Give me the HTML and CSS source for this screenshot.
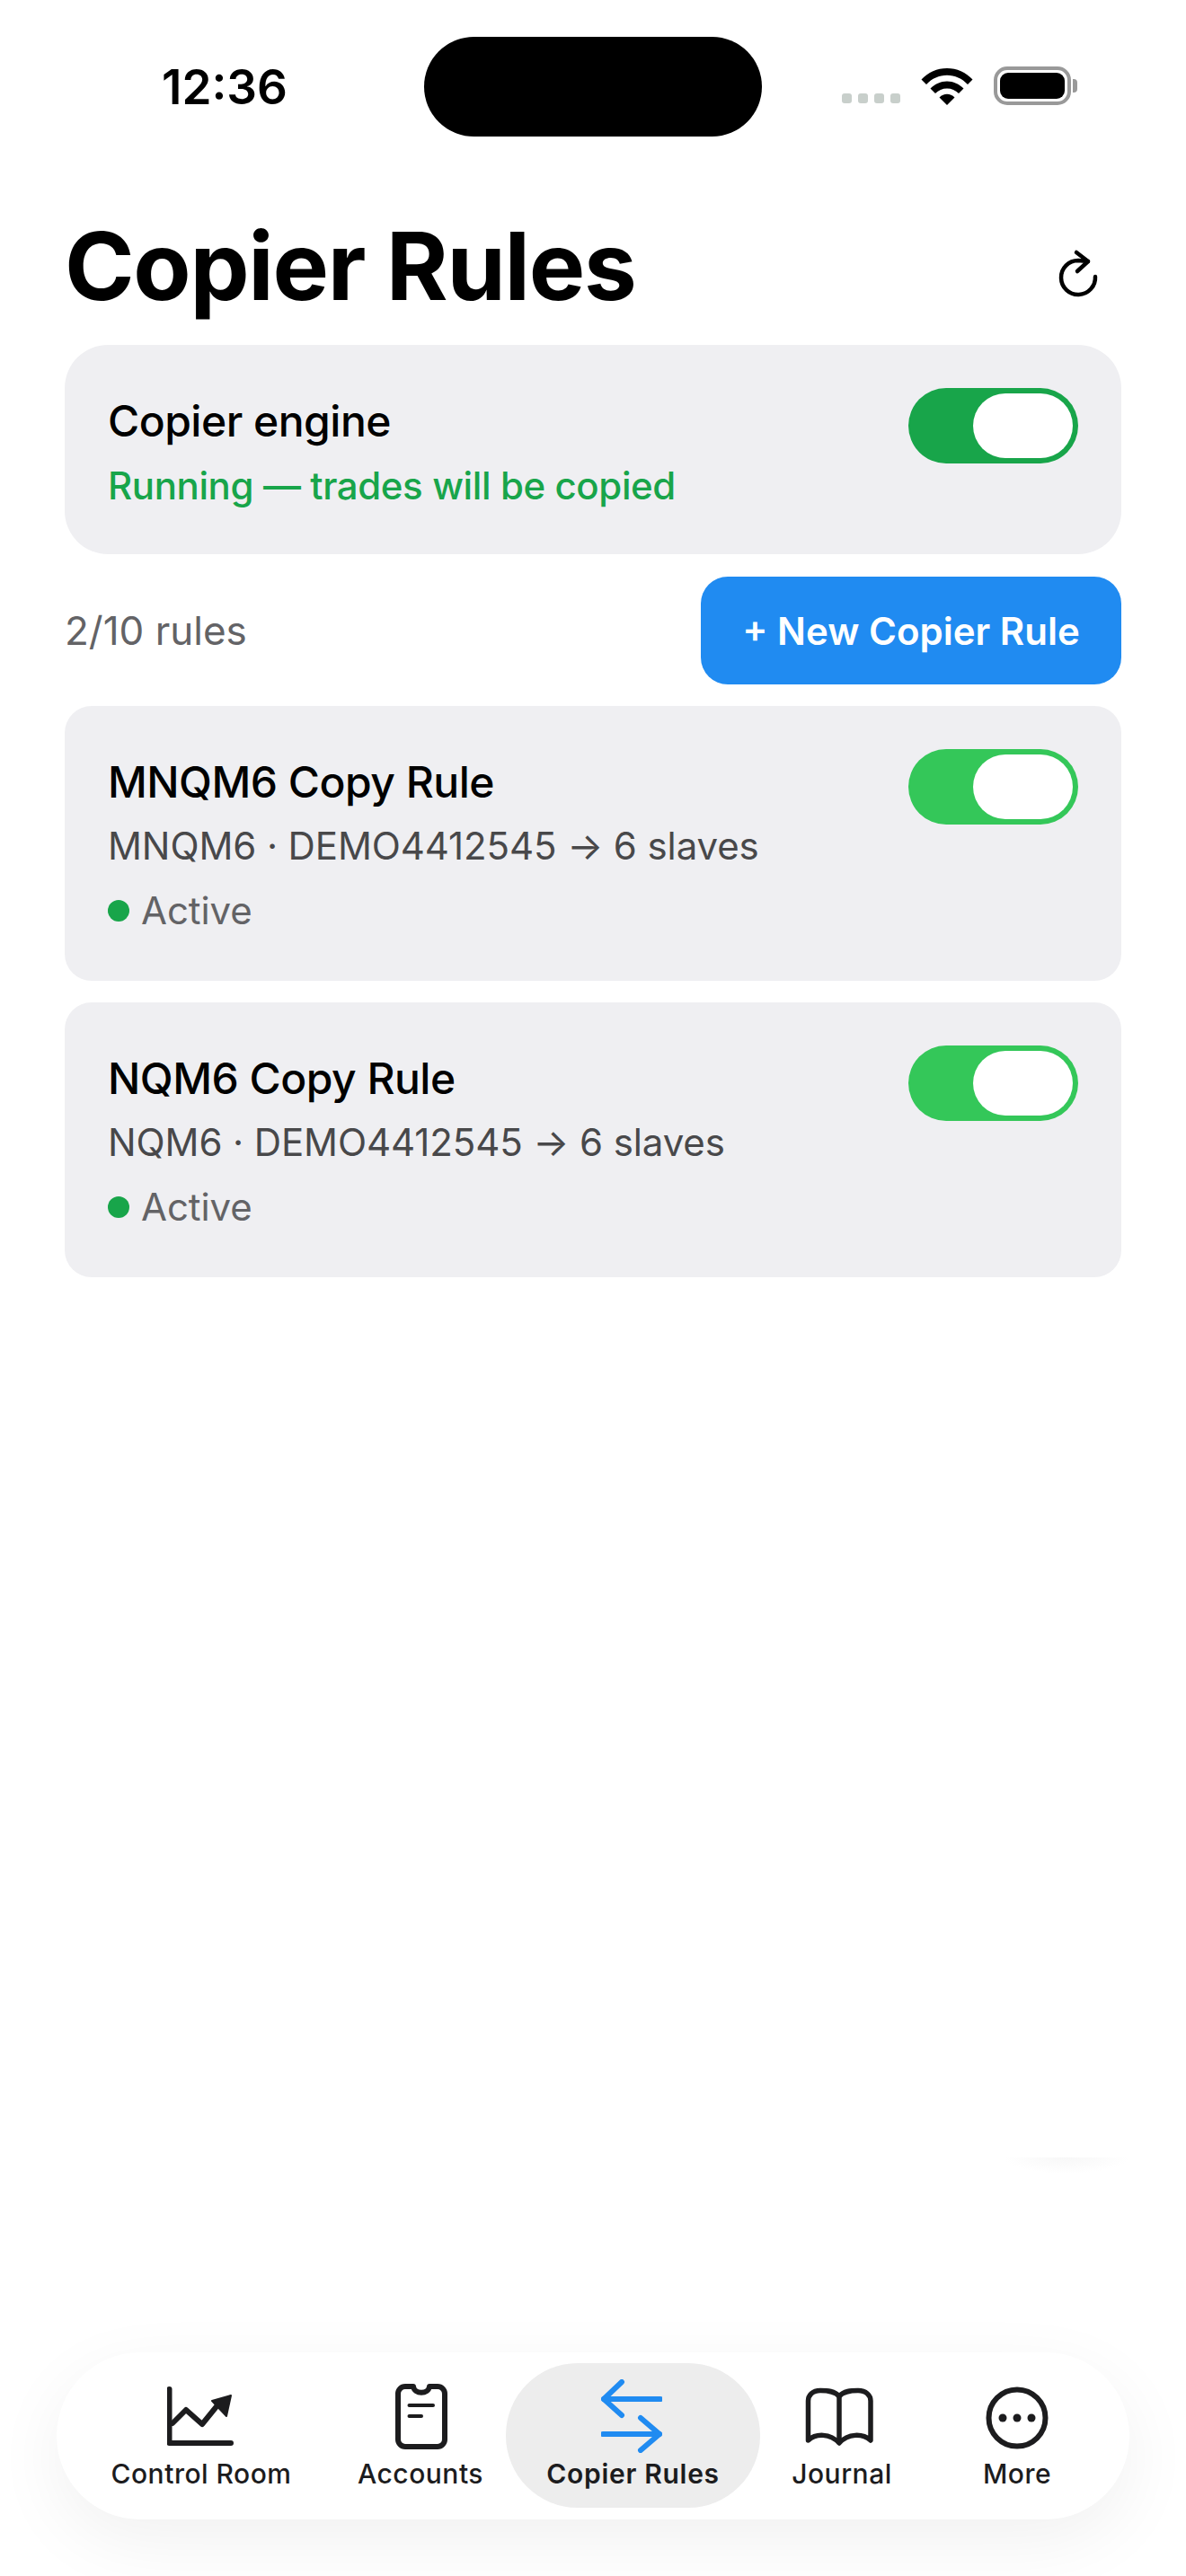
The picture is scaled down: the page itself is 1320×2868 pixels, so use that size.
FILE: index.html
```html
<!DOCTYPE html>
<html lang="en">
<head>
<meta charset="utf-8">
<title>Copier Rules</title>
<link rel="stylesheet" href="styles.css">
</head>
<body>
<div class="screen">
  <header class="status">
    <span class="time">12:36</span>
    <div class="island"></div>
    <div class="status-icons">
      <div class="signal"><i></i><i></i><i></i><i></i></div>
      <svg class="wifi" width="58" height="42" viewBox="0 0 58 42"><path d="M0.5 13.5C8 5.5 18 1 29 1s21 4.500 28.500 12.500L52 19C45.800 12.500 37.800 8.800 29 8.800S12.200 12.500 6 19Z"/><path d="M10.500 23.500C15.500 18.500 22 15.500 29 15.500s13.500 3 18.500 8L42 29c-3.500-3.500-8-5.500-13-5.500s-9.500 2-13 5.500Z"/><path d="M20.500 33.500C23 31 25.800 29.800 29 29.800s6 1.200 8.500 3.700L29 42Z"/></svg>
      <div class="battery"><div class="battery-fill"></div></div>
      <div class="battery-cap"></div>
    </div>
  </header>

  <div class="title-row">
    <h1>Copier Rules</h1>
    <svg class="refresh" width="56" height="60" viewBox="0 0 56 60" fill="none" stroke="#000" stroke-width="4.500" stroke-linecap="round" stroke-linejoin="round"><path d="M49 33A19 19 0 1 1 30 15L41 16"/><path d="M28 6L41 16L29 27"/></svg>
  </div>

  <main class="content">
    <section class="card engine">
      <div class="card-text">
        <div class="card-title">Copier engine</div>
        <div class="engine-sub">Running — trades will be copied</div>
      </div>
      <div class="toggle toggle-dark"><div class="thumb"></div></div>
    </section>

    <div class="toolbar">
      <span class="count">2/10 rules</span>
      <button class="new-btn">+ New Copier Rule</button>
    </div>

    <section class="card rule">
      <div class="card-text">
        <div class="card-title">MNQM6 Copy Rule</div>
        <div class="rule-sub">MNQM6 · DEMO4412545 → 6 slaves</div>
        <div class="state"><i class="dot"></i>Active</div>
      </div>
      <div class="toggle"><div class="thumb"></div></div>
    </section>

    <section class="card rule">
      <div class="card-text">
        <div class="card-title">NQM6 Copy Rule</div>
        <div class="rule-sub">NQM6 · DEMO4412545 → 6 slaves</div>
        <div class="state"><i class="dot"></i>Active</div>
      </div>
      <div class="toggle"><div class="thumb"></div></div>
    </section>
  </main>

  <div class="ghost-shadow"></div>

  <nav class="tabbar">
    <a class="tab tab-control">
      <svg width="76" height="66" viewBox="0 0 76 66" fill="none" stroke="#1c1c1e" stroke-width="6" stroke-linecap="round" stroke-linejoin="round"><path d="M2.500 3V63H71"/><path d="M6 41L21 26L39 42L56 21"/><path d="M50 16L71 10L66 33Z" fill="#1c1c1e" stroke-width="2"/></svg>
      <span>Control Room</span>
    </a>
    <a class="tab tab-accounts">
      <svg width="60" height="74" viewBox="0 0 60 74" fill="none" stroke="#1c1c1e" stroke-width="6" stroke-linecap="round" stroke-linejoin="round"><path d="M22 3H13A8 8 0 0 0 5 11V62A8 8 0 0 0 13 70H49A8 8 0 0 0 57 62V11A8 8 0 0 0 49 3H40C39 12 23 12 22 3Z"/><path class="thin" d="M17.500 24H44"/><path class="thin" d="M17.500 36H31"/></svg>
      <span>Accounts</span>
    </a>
    <a class="tab tab-active">
      <svg width="68" height="82" viewBox="0 0 68 82" fill="none" stroke="#208bf1" stroke-width="6" stroke-linecap="round" stroke-linejoin="round"><path d="M66 22H3"/><path d="M23 3L3 22L23 40"/><path d="M2 61H65"/><path d="M44 43L65 61L44 79"/></svg>
      <span>Copier Rules</span>
    </a>
    <a class="tab tab-journal">
      <svg width="76" height="66" viewBox="0 0 76 66" fill="none" stroke="#1c1c1e" stroke-width="5.500" stroke-linecap="round" stroke-linejoin="round"><path d="M38 11V62"/><path d="M38 11C33 5 25 4.500 17 4.500C8 4.500 3.500 10 3.500 16V60C12 52 28 52 38 63C48 52 64 52 73 60V16C73 10 68 4.500 59 4.500C51 4.500 43 5 38 11Z"/></svg>
      <span>Journal</span>
    </a>
    <a class="tab tab-more">
      <svg width="70" height="70" viewBox="0 0 70 70"><circle cx="35" cy="35" r="31.500" fill="none" stroke="#1c1c1e" stroke-width="6"/><circle cx="19" cy="35" r="4.500" fill="#1c1c1e"/><circle cx="35" cy="35" r="4.500" fill="#1c1c1e"/><circle cx="51" cy="35" r="4.500" fill="#1c1c1e"/></svg>
      <span>More</span>
    </a>
  </nav>
</div>
</body>
</html>
```

FILE: styles.css
```css
* { box-sizing: border-box; }
html, body { margin: 0; padding: 0; background: #fff; }
body { font-family: Inter, "Liberation Sans", sans-serif; color: #000; }

.screen { position: relative; width: 1320px; height: 2868px; overflow: hidden; background: #fff; }

.status { position: relative; height: 234px; }
.time { position: absolute; left: 180px; top: 66px; font-size: 53px; line-height: 62px; font-weight: 600; }
.island { position: absolute; left: 472px; top: 41px; width: 376px; height: 111px; border-radius: 56px; background: #000; }
.status-icons { position: absolute; left: 937px; top: 74px; display: flex; align-items: flex-end; }
.signal { display: flex; gap: 7px; margin-bottom: 2px; margin-right: 23px; }
.signal i { width: 11px; height: 11px; border-radius: 3px; background: #c8cfcb; }
.wifi { fill: #000; margin-right: 23px; }
.battery { width: 86px; height: 43px; border: 4px solid #999; border-radius: 15px; padding: 3px; }
.battery-fill { width: 100%; height: 100%; background: #000; border-radius: 9px; }
.battery-cap { width: 5px; height: 15px; margin: 0 0 14px 2px; background: #999; border-radius: 0 4px 4px 0; }

.title-row { display: flex; justify-content: space-between; align-items: center; padding: 0 72px; height: 124px; }
h1 { margin: 0; font-size: 105px; line-height: 124px; font-weight: 700; letter-spacing: -1.3px; }
.refresh { margin-right: 22px; margin-top: 18px; }

.content { padding: 26px 72px 0; display: flex; flex-direction: column; }
.card { background: #efeff2; display: flex; justify-content: space-between; align-items: flex-start; padding: 48px; }
.engine { height: 233px; border-radius: 48px; }
.rule { height: 306px; border-radius: 30px; margin-bottom: 24px; }
.card-title { font-size: 48px; line-height: 58px; font-weight: 550; letter-spacing: -0.5px; }
.card-text { margin-top: 8px; }
.engine-sub { font-size: 42px; line-height: 52px; color: #18a54a; margin-top: 17px; font-weight: 500; letter-spacing: -0.4px; }
.rule-sub { font-size: 42px; line-height: 52px; color: #48484a; margin-top: 16px; letter-spacing: -0.1px; }
.state { display: flex; align-items: center; font-size: 42px; line-height: 52px; color: #636366; margin-top: 20px; letter-spacing: -0.1px; }
.dot { width: 24px; height: 24px; border-radius: 50%; background: #18a54a; margin-right: 13px; }

.toggle { width: 189px; height: 84px; border-radius: 42px; background: #34c759; padding: 6px; display: flex; justify-content: flex-end; flex: none; }
.toggle-dark { background: #18a54a; }
.thumb { width: 111px; height: 72px; border-radius: 36px; background: #fff; }

.toolbar { display: flex; justify-content: space-between; align-items: center; margin: 25px 0 24px; }
.count { font-size: 44px; line-height: 52px; color: #636366; }
.new-btn { width: 468px; height: 120px; border: 0; border-radius: 30px; background: #208bf1; color: #fff; font-family: inherit; font-size: 42px; font-weight: 600; padding: 0; }

.ghost-shadow { position: absolute; left: 1117px; top: 2402px; width: 140px; height: 18px; background: radial-gradient(ellipse at 50% 0, #f7f7f7, rgba(255,255,255,0) 70%); }

.tabbar { position: absolute; left: 63px; top: 2619px; width: 1194px; height: 186px; border-radius: 93px; background: #fff; box-shadow: 0 24px 80px rgba(0,0,0,.06); }
.tab { position: absolute; top: 12px; height: 161px; display: flex; flex-direction: column; align-items: center; color: #1c1c1e; font-size: 30px; font-weight: 500; line-height: 36px; letter-spacing: 0.5px; white-space: nowrap; }
.tab svg { position: absolute; }
.tab span { position: absolute; top: 105px; }
.tab-control { left: 61px; width: 200px; }
.tab-control svg { top: 26px; }
.tab-accounts { left: 337px; width: 136px; }
.tab-accounts svg { top: 23px; }
.tab-accounts .thin { stroke-width: 4; }
.tab-active { left: 500px; width: 283px; background: #ededed; border-radius: 80px; font-weight: 600; letter-spacing: 0.7px; }
.tab-active svg { top: 18px; margin-left: -3px; }
.tab-journal { left: 814px; width: 120px; }
.tab-journal svg { top: 26px; margin-left: -6px; }
.tab-more { left: 1024px; width: 90px; }
.tab-more svg { top: 26px; }
```
